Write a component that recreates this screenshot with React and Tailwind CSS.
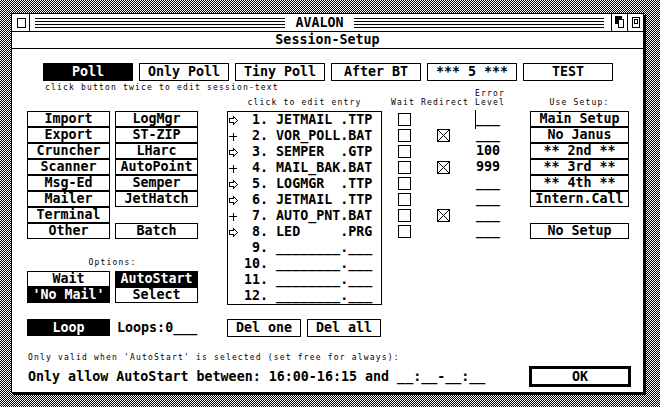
import React from 'react';

const big = "font-['DejaVu_Sans_Mono',monospace] font-bold text-[13.33px] leading-none whitespace-pre";
const small = "font-['DejaVu_Sans_Mono',monospace] text-[8px] tracking-[1.18px] leading-[8px] whitespace-pre";

function Btn({ children, dark, className = '' }) {
  return (
    <div className={`flex items-center justify-center border border-black ${dark ? 'bg-black text-white' : 'bg-white text-black'} ${big} ${className}`}>
      {children}
    </div>
  );
}

function Arrow() {
  return (
    <svg width="10" height="9" viewBox="0 0 10 9" shapeRendering="crispEdges">
      <path d="M0.5 2.5H4.5V0.5L8.5 4.5L4.5 8.5V6.5H0.5Z" fill="white" stroke="black" />
    </svg>
  );
}

function Plus() {
  return (
    <svg width="10" height="9" viewBox="0 0 10 9" shapeRendering="crispEdges">
      <path d="M0 4.5H8M4.5 0.5V8.5" stroke="black" />
    </svg>
  );
}

function Check({ x }) {
  return (
    <div className="w-[13px] h-[13px] border border-black bg-white">
      {x && (
        <svg width="11" height="11" viewBox="0 0 11 11">
          <path d="M0 0L11 11M11 0L0 11" stroke="black" />
        </svg>
      )}
    </div>
  );
}

const entries = [
  { icon: 'a', name: 'JETMAIL .TTP', err: '___', cursor: true },
  { icon: 'p', name: 'VOR_POLL.BAT', err: '___', redir: true },
  { icon: 'a', name: 'SEMPER  .GTP', err: '100' },
  { icon: 'p', name: 'MAIL_BAK.BAT', err: '999', redir: true },
  { icon: 'a', name: 'LOGMGR  .TTP', err: '___' },
  { icon: 'a', name: 'JETMAIL .TTP', err: '___' },
  { icon: 'p', name: 'AUTO_PNT.BAT', err: '___', redir: true },
  { icon: 'a', name: 'LED     .PRG', err: '___' },
  { name: '________.___' },
  { name: '________.___' },
  { name: '________.___' },
  { name: '________.___' },
];

const tools1 = ['Import', 'Export', 'Cruncher', 'Scanner', 'Msg-Ed', 'Mailer', 'Terminal', 'Other'];
const tools2 = ['LogMgr', 'ST-ZIP', 'LHarc', 'AutoPoint', 'Semper', 'JetHatch'];
const setups = ['Main Setup', 'No Janus', '** 2nd **', '** 3rd **', '** 4th **', 'Intern.Call'];
const sessions = ['Poll', 'Only Poll', 'Tiny Poll', 'After BT', '*** 5 ***', 'TEST'];

export default function App() {
  return (
    <div className="w-[660px] h-[407px] overflow-hidden bg-[repeating-conic-gradient(#000_0_25%,#fff_0_50%)] bg-[length:2px_2px] pl-[11px] pt-[13px]">
      <div className="w-[633px] h-[380px] border border-black bg-white shadow-[2px_2px_0_#000] flex flex-col text-black">
        {/* title bar */}
        <div className="flex h-[18px] border-b border-black">
          <div className="w-[18px] border-r border-black">
            <div className="ml-[5px] mt-[4px] w-[9px] h-[10px] border border-black" />
          </div>
          <div className="flex-1 flex items-start pl-[5px] pr-[7px]">
            <div className="flex-1 mt-[4px] h-[10px] bg-[repeating-linear-gradient(#000_0_1px,transparent_1px_3px)]" />
            <div className={`px-[10px] h-[17px] flex items-center ${big}`}>AVALON</div>
            <div className="flex-1 mt-[4px] h-[10px] bg-[repeating-linear-gradient(#000_0_1px,transparent_1px_3px)]" />
          </div>
          <div className="w-[16px] border-l border-black">
            <svg width="15" height="17" viewBox="0 0 15 17" shapeRendering="crispEdges">
              <rect x="3" y="2" width="7" height="8" fill="black" />
              <rect x="6.5" y="5.5" width="5" height="8" fill="white" stroke="black" />
            </svg>
          </div>
          <div className="w-[16px] border-l border-black">
            <svg width="15" height="17" viewBox="0 0 15 17" shapeRendering="crispEdges">
              <rect x="4.5" y="3.5" width="7" height="10" fill="white" stroke="black" />
              <rect x="6.5" y="5.5" width="3" height="4" fill="white" stroke="black" />
            </svg>
          </div>
        </div>

        {/* dialog title */}
        <div className={`h-[17px] border-b border-black flex items-center justify-center ${big}`}>Session-Setup</div>

        {/* content */}
        <div className="flex-1">
          <div className="pl-[31px] pt-[14px] flex gap-[6px]">
            {sessions.map((s, i) => (
              <Btn key={s} dark={i === 0} className="w-[90px] h-[18px]">{s}</Btn>
            ))}
          </div>
          <div className={`mt-[3px] pl-[33px] h-[8px] ${small}`}>click button twice to edit session-text</div>

          <div className="flex items-start">
            {/* left tools */}
            <div className="ml-[15px] w-[171px] pt-[19px]">
              <div className="flex gap-[5px]">
                <div className="w-[83px] flex flex-col">
                  {tools1.map(t => <Btn key={t} className="h-[16px]">{t}</Btn>)}
                </div>
                <div className="w-[83px] flex flex-col">
                  {tools2.map(t => <Btn key={t} className="h-[16px]">{t}</Btn>)}
                  <div className="h-[16px]" />
                  <Btn className="h-[16px]">Batch</Btn>
                </div>
              </div>
              <div className={`mt-[20px] h-[8px] text-center ${small}`}>Options:</div>
              <div className="mt-[4px] flex gap-[5px]">
                <div className="w-[83px] flex flex-col">
                  <Btn className="h-[16px]">Wait</Btn>
                  <Btn dark className="h-[16px]">'No Mail'</Btn>
                </div>
                <div className="w-[83px] flex flex-col">
                  <Btn dark className="h-[16px]">AutoStart</Btn>
                  <Btn className="h-[16px]">Select</Btn>
                </div>
              </div>
              <div className="mt-[16px] flex items-center">
                <Btn dark className="w-[83px] h-[17px]">Loop</Btn>
                <div className={`ml-[7px] ${big}`}>Loops:0___</div>
              </div>
            </div>

            {/* entry list */}
            <div className="ml-[29px] w-[155px]">
              <div className={`mt-[7px] h-[8px] text-center ${small}`}>click to edit entry</div>
              <div className="mt-[4px] h-[194px] border border-black">
                {entries.map((e, i) => (
                  <div key={i} className="h-[16px] flex items-center">
                    <div className="w-[16px] pl-[1px] flex items-center">
                      {e.icon === 'a' && <Arrow />}
                      {e.icon === 'p' && <Plus />}
                    </div>
                    <div className={big}>{`${String(i + 1).padStart(2, ' ')}. ${e.name}`}</div>
                  </div>
                ))}
              </div>
              <div className="mt-[14px] flex gap-[6px]">
                <Btn className="w-[74px] h-[18px]">Del one</Btn>
                <Btn className="w-[74px] h-[18px]">Del all</Btn>
              </div>
            </div>

            {/* wait / redirect / error level */}
            <div className="ml-[9px] w-[114px]">
              <div className={`-mt-[2px] h-[8px] pl-[84px] ${small}`}>Error</div>
              <div className={`mt-[1px] h-[8px] ${small}`}>Wait Redirect Level</div>
              <div className="mt-[4px]">
                {entries.slice(0, 8).map((e, i) => (
                  <div key={i} className="h-[16px] flex items-center pl-[7px]">
                    <Check />
                    <div className="ml-[26px] w-[13px]">{e.redir && <Check x />}</div>
                    <div className="ml-[26px] relative h-[16px] flex items-center">
                      {e.cursor && <div className="absolute left-[-1px] top-[-1px] w-px h-[19px] bg-black" />}
                      <span className={big}>{e.err}</span>
                    </div>
                  </div>
                ))}
              </div>
            </div>

            {/* use setup */}
            <div className="ml-[25px] w-[99px]">
              <div className={`mt-[7px] h-[8px] text-center ${small}`}>Use Setup:</div>
              <div className="mt-[4px] flex flex-col">
                {setups.map(s => <Btn key={s} className="h-[16px]">{s}</Btn>)}
                <div className="h-[16px]" />
                <Btn className="h-[16px]">No Setup</Btn>
              </div>
            </div>
          </div>

          {/* bottom */}
          <div className={`mt-[17px] pl-[16px] h-[8px] ${small}`}>Only valid when 'AutoStart' is selected (set free for always):</div>
          <div className="mt-[4px] h-[21px] flex items-center">
            <div className={`pl-[16px] ${big}`}>Only allow AutoStart between: 16:00-16:15 and __:__-__:__</div>
            <div className={`ml-auto mr-[12px] w-[102px] h-[21px] border-[3px] border-black flex items-center justify-center ${big}`}>OK</div>
          </div>
        </div>
      </div>
    </div>
  );
}
